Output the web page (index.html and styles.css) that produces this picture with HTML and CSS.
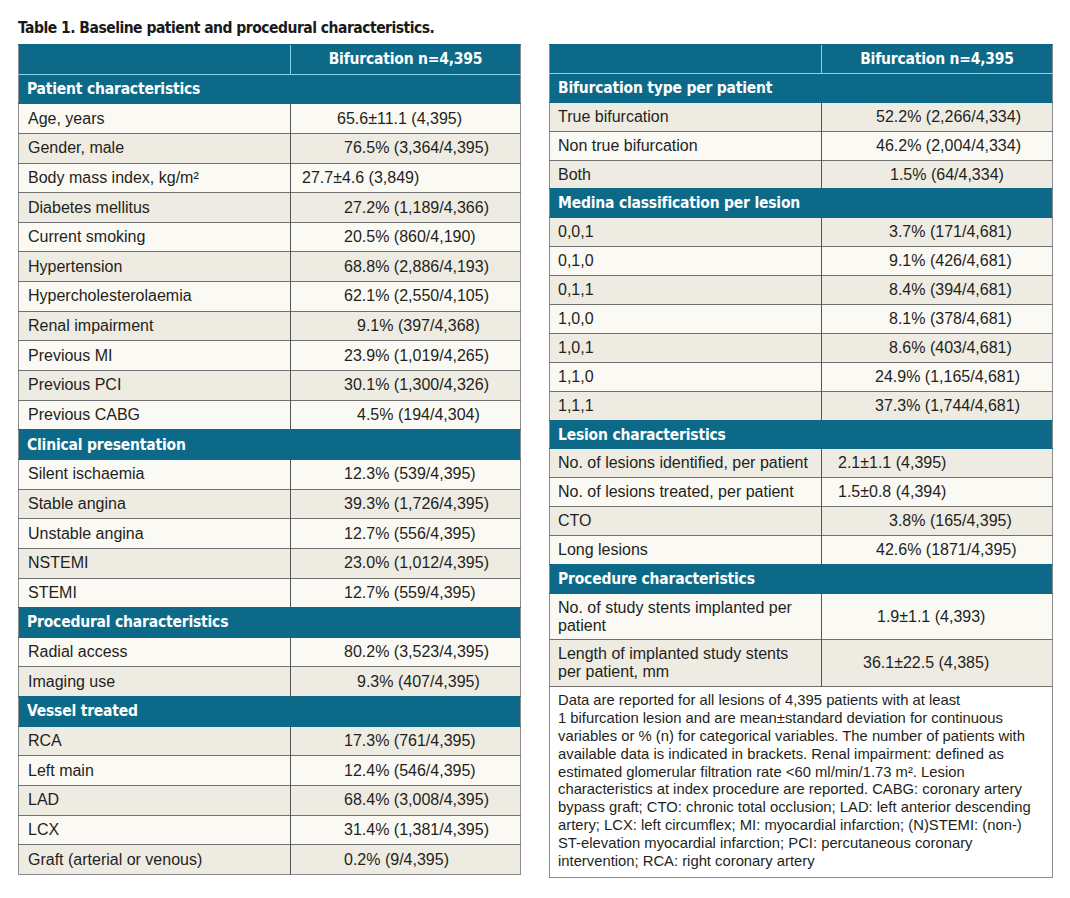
FILE: index.html
```html
<!DOCTYPE html>
<html lang="en">
<head>
<meta charset="utf-8">
<title>Table 1</title>
<link rel="stylesheet" href="styles.css">
</head>
<body>
<div class="page">
  <h1 class="title">Table 1. Baseline patient and procedural characteristics.</h1>
  <div class="tables">
    <table class="tbl tbl-left">
      <colgroup><col class="c1"><col class="c2"></colgroup>
      <tbody>
        <tr class="head"><td></td><td class="hval">Bifurcation n=4,395</td></tr>
        <tr class="sec"><td colspan="2">Patient characteristics</td></tr>
        <tr><td>Age, years</td><td class="v p46">65.6±11.1 (4,395)</td></tr>
        <tr><td>Gender, male</td><td class="v">76.5% (3,364/4,395)</td></tr>
        <tr><td>Body mass index, kg/m²</td><td class="v p11">27.7±4.6 (3,849)</td></tr>
        <tr><td>Diabetes mellitus</td><td class="v">27.2% (1,189/4,366)</td></tr>
        <tr><td>Current smoking</td><td class="v">20.5% (860/4,190)</td></tr>
        <tr><td>Hypertension</td><td class="v">68.8% (2,886/4,193)</td></tr>
        <tr><td>Hypercholesterolaemia</td><td class="v">62.1% (2,550/4,105)</td></tr>
        <tr><td>Renal impairment</td><td class="v p66">9.1% (397/4,368)</td></tr>
        <tr><td>Previous MI</td><td class="v">23.9% (1,019/4,265)</td></tr>
        <tr><td>Previous PCI</td><td class="v">30.1% (1,300/4,326)</td></tr>
        <tr><td>Previous CABG</td><td class="v p66">4.5% (194/4,304)</td></tr>
        <tr class="sec"><td colspan="2">Clinical presentation</td></tr>
        <tr><td>Silent ischaemia</td><td class="v">12.3% (539/4,395)</td></tr>
        <tr><td>Stable angina</td><td class="v">39.3% (1,726/4,395)</td></tr>
        <tr><td>Unstable angina</td><td class="v">12.7% (556/4,395)</td></tr>
        <tr><td>NSTEMI</td><td class="v">23.0% (1,012/4,395)</td></tr>
        <tr><td>STEMI</td><td class="v">12.7% (559/4,395)</td></tr>
        <tr class="sec"><td colspan="2">Procedural characteristics</td></tr>
        <tr><td>Radial access</td><td class="v">80.2% (3,523/4,395)</td></tr>
        <tr><td>Imaging use</td><td class="v p66">9.3% (407/4,395)</td></tr>
        <tr class="sec"><td colspan="2">Vessel treated</td></tr>
        <tr><td>RCA</td><td class="v">17.3% (761/4,395)</td></tr>
        <tr><td>Left main</td><td class="v">12.4% (546/4,395)</td></tr>
        <tr><td>LAD</td><td class="v">68.4% (3,008/4,395)</td></tr>
        <tr><td>LCX</td><td class="v">31.4% (1,381/4,395)</td></tr>
        <tr><td>Graft (arterial or venous)</td><td class="v">0.2% (9/4,395)</td></tr>
      </tbody>
    </table>

    <table class="tbl tbl-right">
      <colgroup><col class="c1"><col class="c2"></colgroup>
      <tbody>
        <tr class="head"><td></td><td class="hval">Bifurcation n=4,395</td></tr>
        <tr class="sec"><td colspan="2">Bifurcation type per patient</td></tr>
        <tr><td>True bifurcation</td><td class="v">52.2% (2,266/4,334)</td></tr>
        <tr><td>Non true bifurcation</td><td class="v">46.2% (2,004/4,334)</td></tr>
        <tr><td>Both</td><td class="v p68">1.5% (64/4,334)</td></tr>
        <tr class="sec"><td colspan="2">Medina classification per lesion</td></tr>
        <tr><td>0,0,1</td><td class="v p67">3.7% (171/4,681)</td></tr>
        <tr><td>0,1,0</td><td class="v p67">9.1% (426/4,681)</td></tr>
        <tr><td>0,1,1</td><td class="v p67">8.4% (394/4,681)</td></tr>
        <tr><td>1,0,0</td><td class="v p67">8.1% (378/4,681)</td></tr>
        <tr><td>1,0,1</td><td class="v p67">8.6% (403/4,681)</td></tr>
        <tr><td>1,1,0</td><td class="v p53">24.9% (1,165/4,681)</td></tr>
        <tr><td>1,1,1</td><td class="v p53">37.3% (1,744/4,681)</td></tr>
        <tr class="sec"><td colspan="2">Lesion characteristics</td></tr>
        <tr><td>No. of lesions identified, per patient</td><td class="v p16">2.1±1.1 (4,395)</td></tr>
        <tr><td>No. of lesions treated, per patient</td><td class="v p16">1.5±0.8 (4,394)</td></tr>
        <tr><td>CTO</td><td class="v p67">3.8% (165/4,395)</td></tr>
        <tr><td>Long lesions</td><td class="v">42.6% (1871/4,395)</td></tr>
        <tr class="sec"><td colspan="2">Procedure characteristics</td></tr>
        <tr class="tall"><td>No. of study stents implanted per patient</td><td class="v p55">1.9±1.1 (4,393)</td></tr>
        <tr class="tall"><td>Length of implanted study stents per patient, mm</td><td class="v p41">36.1±22.5 (4,385)</td></tr>
        <tr class="note"><td colspan="2">Data are reported for all lesions of 4,395 patients with at least<br>1 bifurcation lesion and are mean±standard deviation for continuous<br>variables or % (n) for categorical variables. The number of patients with<br>available data is indicated in brackets. Renal impairment: defined as<br>estimated glomerular filtration rate &lt;60 ml/min/1.73 m². Lesion<br>characteristics at index procedure are reported. CABG: coronary artery<br>bypass graft; CTO: chronic total occlusion; LAD: left anterior descending<br>artery; LCX: left circumflex; MI: myocardial infarction; (N)STEMI: (non-)<br>ST-elevation myocardial infarction; PCI: percutaneous coronary<br>intervention; RCA: right coronary artery</td></tr>
      </tbody>
    </table>
  </div>
</div>
</body>
</html>
```
FILE: styles.css
```css
* { box-sizing: border-box; }

body {
  margin: 0;
  background: #ffffff;
  color: #231f20;
  font-family: "Liberation Sans", Arial, sans-serif;
}

.page {
  padding: 18px 17px 0 18px;
}

.title {
  margin: 0 0 5px;
  font-family: "DejaVu Sans Condensed", "Liberation Sans", sans-serif;
  font-weight: bold;
  font-size: 15.5px;
  letter-spacing: -0.5px;
  line-height: 21px;
  color: #1a1a1a;
}

.tables {
  display: flex;
  gap: 28px;
  align-items: flex-start;
}

.tbl {
  width: 503px;
  border-collapse: collapse;
  table-layout: fixed;
  border: 1px solid #8c8c8c;
  font-size: 16px;
}

.tbl-right { width: 504px; }

.c1 { width: 272px; }

.tbl td {
  padding: 0 4px 0 9px;
  border-top: 1px solid #707070;
  vertical-align: middle;
  line-height: 18px;
  white-space: nowrap;
}

.tbl-right td { padding-left: 8px; }

.tbl td + td {
  border-left: 1px solid #555555;
}

.tbl-left tr { height: 29.65px; }
.tbl-right tr { height: 28.9px; }

.tbl-left tr:nth-child(odd) td { background: #fbf9f4; }
.tbl-left tr:nth-child(even) td { background: #eeebe2; }
.tbl-right tr:nth-child(odd) td { background: #eeebe2; }
.tbl-right tr:nth-child(even) td { background: #fbf9f4; }

.tbl tr.head td,
.tbl tr.sec td {
  background: #0c6a88;
  color: #ffffff;
  font-family: "DejaVu Sans Condensed", "Liberation Sans", sans-serif;
  font-weight: bold;
  font-size: 15.5px;
  letter-spacing: -0.2px;
  border-top: 1px solid #0c6a88;
}

.tbl tr.head td {
  border-bottom: 1px solid #7fd3ec;
}

.tbl tr.head td + td {
  border-left: 1px solid #7fd3ec;
}

.tbl tr.head td.hval {
  text-align: center;
  padding: 0;
}

.tbl tr.sec td {
  padding-left: 8px;
}

.tbl tr.sec + tr td {
  border-top: 1px solid #0c6a88;
}

.tbl td.v { padding-left: 53px; padding-right: 0; }
.tbl-right td.v { padding-left: 54px; }
.tbl td.v.p11 { padding-left: 11px; }
.tbl td.v.p16 { padding-left: 16px; }
.tbl td.v.p41 { padding-left: 41px; }
.tbl td.v.p46 { padding-left: 46px; }
.tbl td.v.p53 { padding-left: 53px; }
.tbl td.v.p55 { padding-left: 55px; }
.tbl td.v.p66 { padding-left: 66px; }
.tbl td.v.p67 { padding-left: 67px; }
.tbl td.v.p68 { padding-left: 68px; }

.tbl-right tr.tall { height: 46.5px; }
.tbl-right tr.tall td:first-child {
  white-space: normal;
  padding-right: 10px;
}

.tbl-right tr.note td {
  background: #ffffff;
  font-size: 14.8px;
  line-height: 17.9px;
  padding: 5px 6px 6px 8px;
  vertical-align: top;
  height: 183px;
}
```
